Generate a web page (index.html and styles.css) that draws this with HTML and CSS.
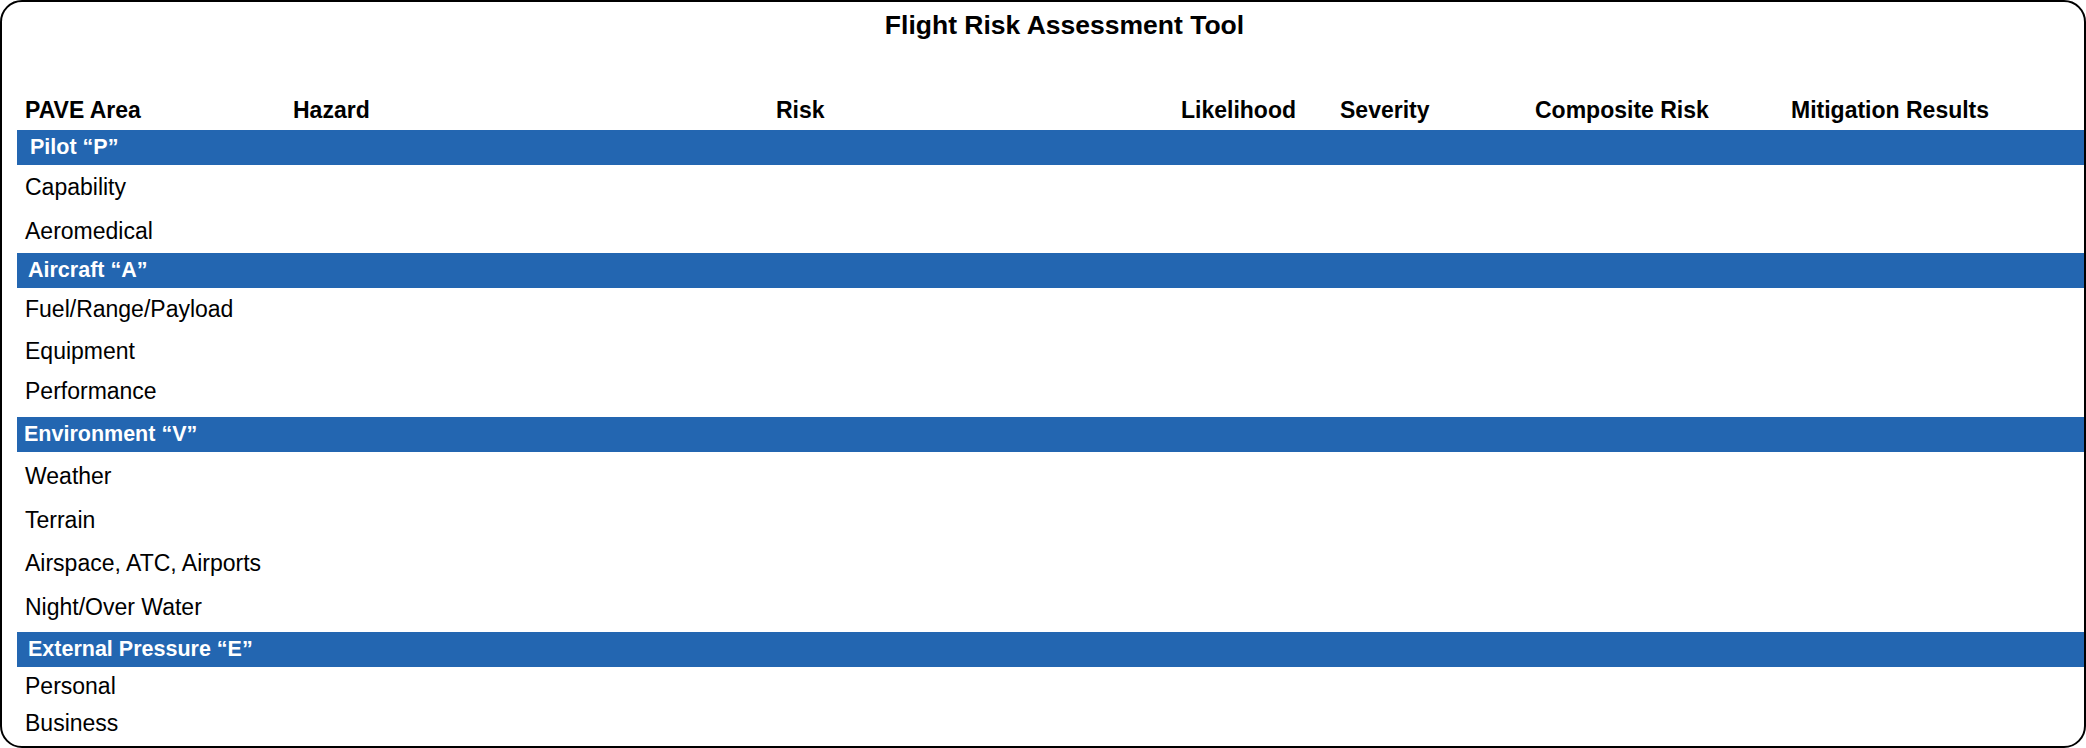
FILE: index.html
```html
<!DOCTYPE html>
<html lang="en">
<head>
<meta charset="utf-8">
<title>Flight Risk Assessment Tool</title>
<link rel="stylesheet" href="styles.css">
</head>
<body>
<div class="frame">
  <h1 class="title">Flight Risk Assessment Tool</h1>
  <div class="head-row">
    <div>PAVE Area</div>
    <div>Hazard</div>
    <div>Risk</div>
    <div>Likelihood</div>
    <div>Severity</div>
    <div>Composite Risk</div>
    <div>Mitigation Results</div>
  </div>

  <div class="bar bar-p">Pilot “P”</div>
  <div class="section sec-p">
    <div class="row">Capability</div>
    <div class="row">Aeromedical</div>
  </div>

  <div class="bar bar-a">Aircraft “A”</div>
  <div class="section sec-a">
    <div class="row">Fuel/Range/Payload</div>
    <div class="row">Equipment</div>
    <div class="row">Performance</div>
  </div>

  <div class="bar bar-v">Environment “V”</div>
  <div class="section sec-v">
    <div class="row">Weather</div>
    <div class="row">Terrain</div>
    <div class="row">Airspace, ATC, Airports</div>
    <div class="row">Night/Over Water</div>
  </div>

  <div class="bar bar-e">External Pressure “E”</div>
  <div class="section sec-e">
    <div class="row">Personal</div>
    <div class="row">Business</div>
  </div>
</div>
</body>
</html>
```

FILE: styles.css
```css
* { box-sizing: border-box; }

html, body {
  margin: 0;
  padding: 0;
  background: #ffffff;
}

body {
  font-family: "Liberation Sans", Arial, sans-serif;
  color: #000;
}

.frame {
  width: 2086px;
  height: 748px;
  border: 2px solid #000;
  border-radius: 22px;
  overflow: hidden;
  display: flex;
  flex-direction: column;
  padding: 7px 0 0 0;
}

.title {
  margin: 0;
  padding-left: 43px;
  font-size: 26.5px;
  line-height: 32px;
  font-weight: bold;
  text-align: center;
}

.head-row {
  margin-top: 54px;
  padding-left: 23px;
  display: grid;
  grid-template-columns: 268px 483px 405px 159px 195px 256px 1fr;
  font-size: 23px;
  font-weight: bold;
  line-height: 30px;
  height: 30px;
}

.bar {
  margin-left: 15px;
  height: 35px;
  background: #2366b1;
  color: #fff;
  font-size: 21.5px;
  font-weight: bold;
  line-height: 35px;
  flex: none;
}

.bar-p { margin-top: 5px; padding-left: 13px; }
.bar-a { padding-left: 11px; }
.bar-v { padding-left: 7px; }
.bar-e { padding-left: 11px; }

.section {
  display: flex;
  flex-direction: column;
  padding-left: 23px;
  font-size: 23px;
  flex: none;
}

.row {
  display: flex;
  align-items: center;
}

.sec-p .row { height: 44px; }

.sec-a { padding-bottom: 7px; }
.sec-a .row { height: 42px; }
.sec-a .row:last-child { height: 38px; }

.sec-v { padding-top: 3px; padding-bottom: 3px; }
.sec-v .row { height: 43.5px; }

.sec-e { padding-top: 1px; }
.sec-e .row { height: 37px; }
```
